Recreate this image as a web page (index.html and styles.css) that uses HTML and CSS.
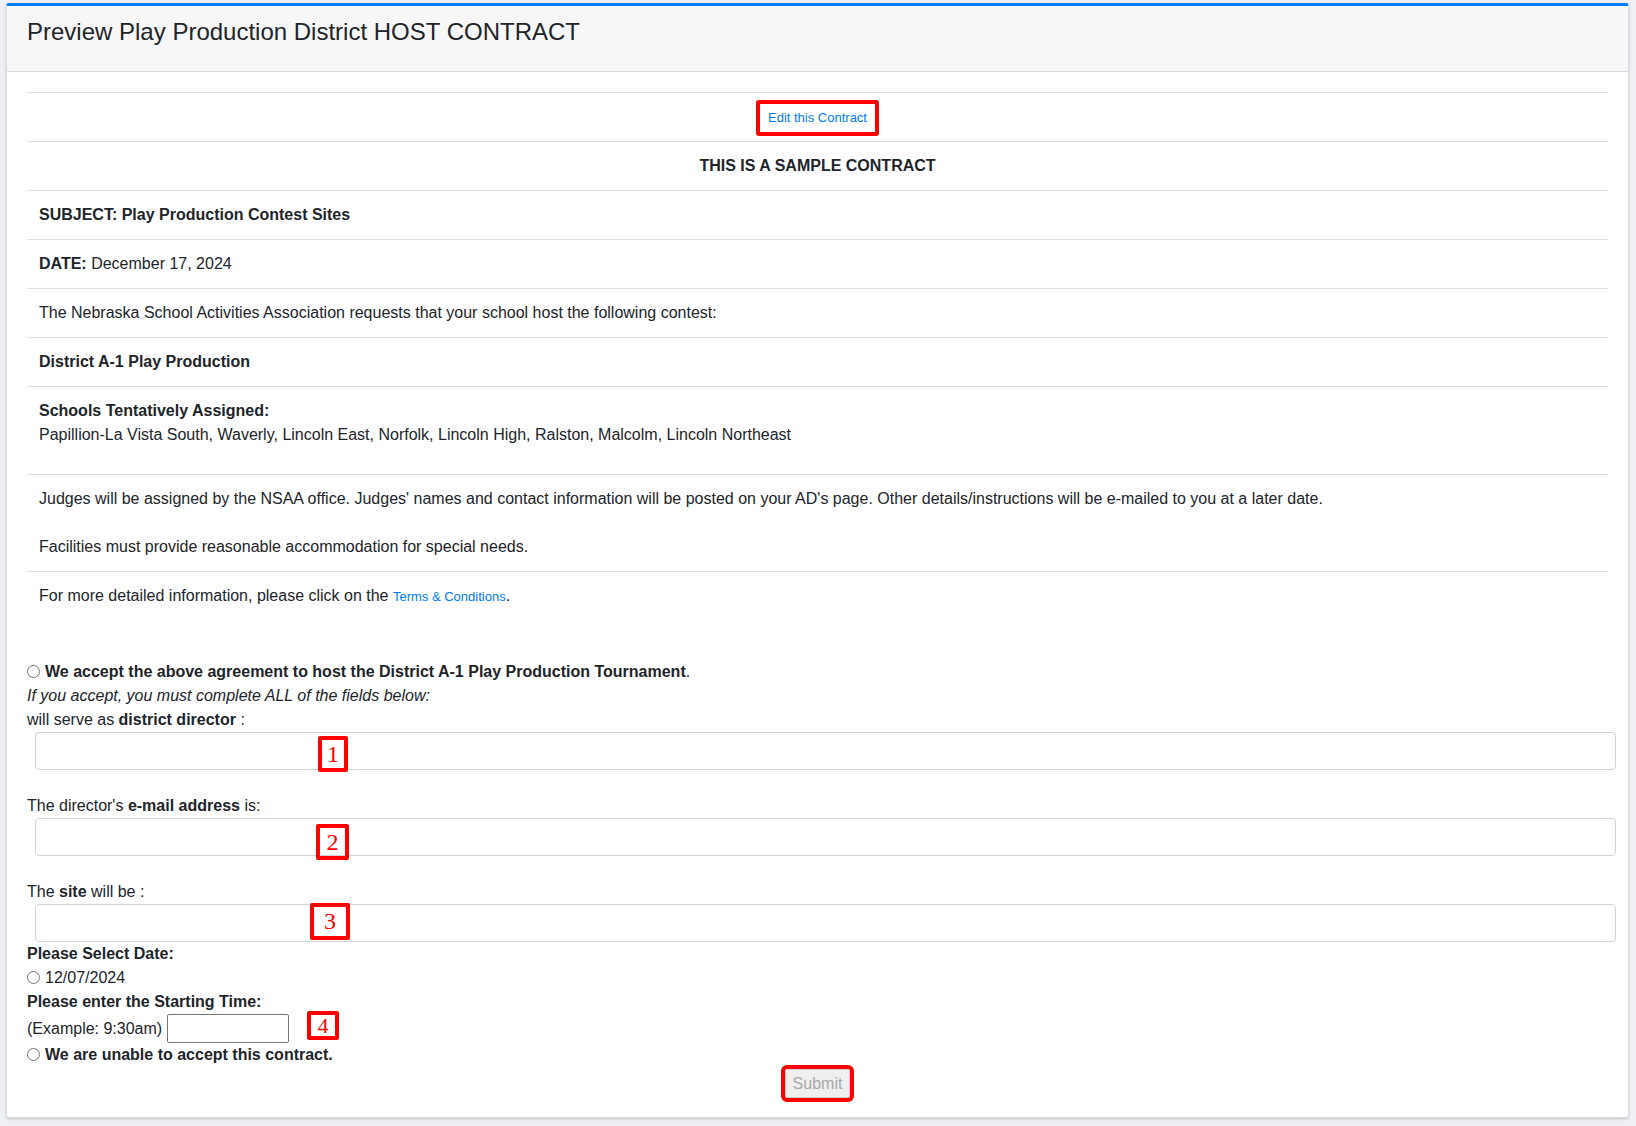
FILE: index.html
```html
<!DOCTYPE html>
<html lang="en">
<head>
<meta charset="utf-8">
<title>Preview Play Production District HOST CONTRACT</title>
<link rel="stylesheet" href="styles.css">
</head>
<body>
<div class="card">
  <div class="card-header">
    <h1 class="card-title">Preview Play Production District HOST CONTRACT</h1>
  </div>
  <div class="card-body">
    <div class="contract-table">
      <div class="trow center"><a class="edit-link" href="#">Edit this Contract</a></div>
      <div class="trow center"><b>THIS IS A SAMPLE CONTRACT</b></div>
      <div class="trow"><b>SUBJECT: Play Production Contest Sites</b></div>
      <div class="trow"><b>DATE:</b> December 17, 2024</div>
      <div class="trow">The Nebraska School Activities Association requests that your school host the following contest:</div>
      <div class="trow"><b>District A-1 Play Production</b></div>
      <div class="trow schools"><b>Schools Tentatively Assigned:</b><br>Papillion-La Vista South, Waverly, Lincoln East, Norfolk, Lincoln High, Ralston, Malcolm, Lincoln Northeast</div>
      <div class="trow">Judges will be assigned by the NSAA office. Judges' names and contact information will be posted on your AD's page. Other details/instructions will be e-mailed to you at a later date.<br><br>Facilities must provide reasonable accommodation for special needs.</div>
      <div class="trow">For more detailed information, please click on the <a class="small-link" href="#">Terms &amp; Conditions</a>.</div>
    </div>

    <form class="accept-form">
      <div class="line"><label><input type="radio" name="accept" class="radio"><b>We accept the above agreement to host the District A-1 Play Production Tournament</b>.</label></div>
      <div class="line"><i>If you accept, you must complete ALL of the fields below:</i></div>
      <div class="line">will serve as <b>district director</b> :</div>
      <div class="field"><input type="text" class="form-control"><span class="marker m1">1</span></div>
      <div class="line label-gap">The director's <b>e-mail address</b> is:</div>
      <div class="field"><input type="text" class="form-control"><span class="marker m2">2</span></div>
      <div class="line label-gap">The <b>site</b> will be :</div>
      <div class="field"><input type="text" class="form-control"><span class="marker m3">3</span></div>
      <div class="line"><b>Please Select Date:</b></div>
      <div class="line"><label><input type="radio" name="date" class="radio">12/07/2024</label></div>
      <div class="line"><b>Please enter the Starting Time:</b></div>
      <div class="line time-line">(Example: 9:30am) <input type="text" class="time-input"><span class="marker m4">4</span></div>
      <div class="line"><label><input type="radio" name="accept" class="radio"><b>We are unable to accept this contract.</b></label></div>
      <div class="submit-row"><button type="button" class="submit-btn" disabled>Submit</button></div>
    </form>
  </div>
</div>
</body>
</html>
```

FILE: styles.css
```css
html, body {
  margin: 0;
  padding: 0;
}

body {
  background: #eff0f4;
  font-family: "Liberation Sans", Arial, Helvetica, sans-serif;
  font-size: 16px;
  line-height: 24px;
  color: #212529;
  padding: 3px 7px 8px 6px;
}

.card {
  background: #fff;
  border: 1px solid #dcdde0;
  border-top: 3px solid #007bff;
  border-radius: 3px;
  box-shadow: 0 1px 3px rgba(0, 0, 0, 0.18);
  height: 1115px;
  box-sizing: border-box;
}

.card-header {
  background: #f7f7f7;
  border-bottom: 1px solid #dadada;
  padding: 11px 20px 25px;
}

.card-title {
  margin: 0;
  font-size: 24px;
  font-weight: 400;
  line-height: 29px;
  color: #212529;
}

.card-body {
  padding: 20px 20px 20px 20px;
}

.contract-table {
  margin-bottom: 39px;
}

.trow {
  border-top: 1px solid #dee2e6;
  padding: 12px 12px;
}

.trow.center {
  text-align: center;
}

.trow.schools {
  padding-bottom: 27px;
}

.edit-link {
  display: inline-block;
  font-size: 13px;
  line-height: 16px;
  color: #007bff;
  text-decoration: none;
  border: 4px solid #ff0000;
  border-radius: 3px;
  padding: 6px 8px;
  margin: -10px 0;
  vertical-align: middle;
}

.small-link {
  font-size: 13px;
  color: #007bff;
  text-decoration: none;
}

.accept-form {
  margin: 0;
}

.line {
  line-height: 24px;
}

.line label {
  font-weight: normal;
}

.radio {
  width: 13px;
  height: 13px;
  margin: 0 5px 0 0;
  vertical-align: -1px;
}

.label-gap {
  margin-top: 24px;
}

.field {
  position: relative;
  margin-left: 8px;
}

.form-control {
  display: block;
  box-sizing: border-box;
  width: calc(100% + 8px);
  height: 38px;
  padding: 6px 12px;
  font-family: inherit;
  font-size: 16px;
  border: 1px solid #ced4da;
  border-radius: 4px;
  background: #fff;
  margin: 0;
}

.marker {
  position: absolute;
  box-sizing: border-box;
  border: 4px solid #ff0000;
  border-radius: 2px;
  color: #ff0000;
  font-family: "Liberation Serif", "Times New Roman", serif;
  font-size: 24px;
  line-height: 28px;
  text-align: center;
  background: transparent;
  pointer-events: none;
}

.m1 { left: 283px; top: 4px; width: 30px; height: 36px; }
.m2 { left: 281px; top: 6px; width: 33px; height: 36px; }
.m3 { left: 275px; top: -1px; width: 40px; height: 37px; line-height: 29px; }

.time-line {
  position: relative;
  height: 29px;
  display: flex;
  align-items: center;
}

.time-input {
  box-sizing: border-box;
  width: 122px;
  height: 29px;
  border: 1px solid #767676;
  border-radius: 2px;
  margin: 0 0 0 5px;
  font-size: 14px;
}

.m4 { left: 280px; top: -3px; width: 32px; height: 29px; font-size: 22px; line-height: 22px; }

.submit-row {
  text-align: center;
  padding-top: 2px;
  line-height: 0;
}

.submit-btn {
  font-family: "Liberation Sans", Arial, sans-serif;
  font-size: 16px;
  line-height: 18px;
  height: 29px;
  padding: 0 7px;
  color: #a8a8a8;
  background: #efefef;
  border: 1px solid #cfcfcf;
  border-radius: 2px;
  outline: 4px solid #ff0000;
  outline-offset: 0;
}
```
